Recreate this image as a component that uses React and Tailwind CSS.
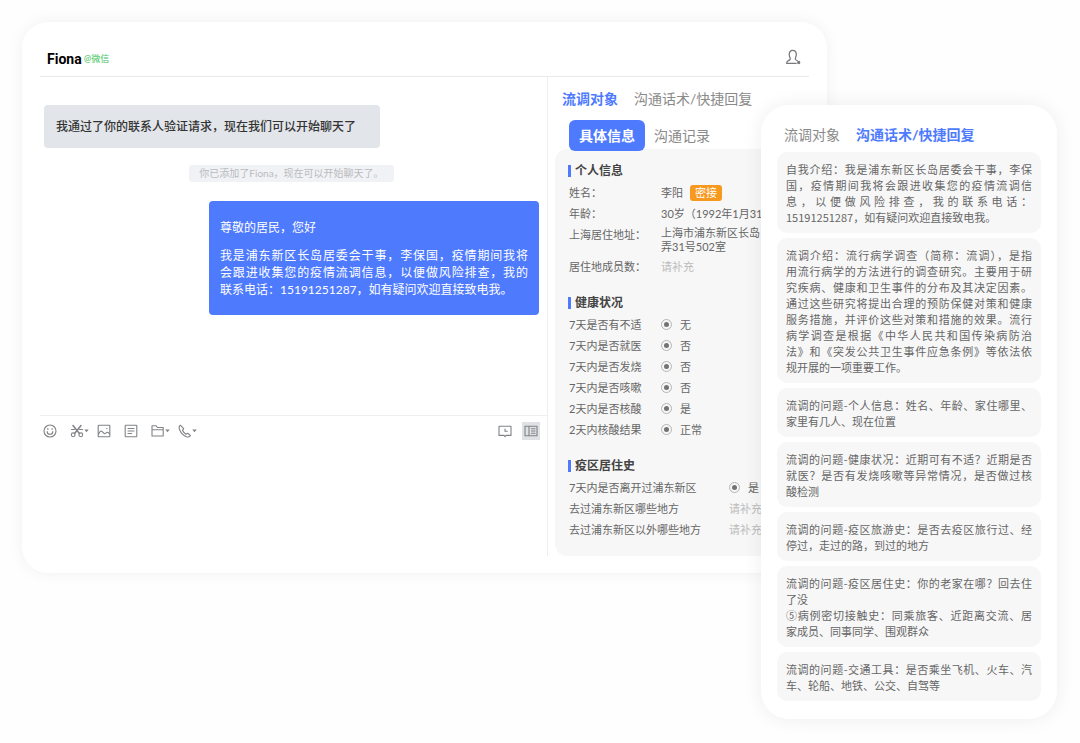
import { useState } from "react";

const GREETING = [
  "我是浦东新区长岛居委会干事，李保国，疫情期间我将",
  "会跟进收集您的疫情流调信息，以便做风险排查，我的",
  "联系电话：15191251287，如有疑问欢迎直接致电我。",
];

const HEALTH = [
  { label: "7天是否有不适", value: "无" },
  { label: "7天内是否就医", value: "否" },
  { label: "7天内是否发烧", value: "否" },
  { label: "7天内是否咳嗽", value: "否" },
  { label: "2天内是否核酸", value: "是" },
  { label: "2天内核酸结果", value: "正常" },
];

// each reply is a list of paragraphs, each paragraph a list of lines
const REPLIES = [
  [
    [
      "自我介绍：我是浦东新区长岛居委会干事，李保",
      "国，疫情期间我将会跟进收集您的疫情流调信",
      "息，以便做风险排查，我的联系电话：",
      "15191251287，如有疑问欢迎直接致电我。",
    ],
  ],
  [
    [
      "流调介绍：流行病学调查（简称：流调），是指",
      "用流行病学的方法进行的调查研究。主要用于研",
      "究疾病、健康和卫生事件的分布及其决定因素。",
      "通过这些研究将提出合理的预防保健对策和健康",
      "服务措施，并评价这些对策和措施的效果。流行",
      "病学调查是根据《中华人民共和国传染病防治",
      "法》和《突发公共卫生事件应急条例》等依法依",
      "规开展的一项重要工作。",
    ],
  ],
  [["流调的问题-个人信息：姓名、年龄、家住哪里、", "家里有几人、现在位置"]],
  [
    [
      "流调的问题-健康状况：近期可有不适？近期是否",
      "就医？是否有发烧咳嗽等异常情况，是否做过核",
      "酸检测",
    ],
  ],
  [["流调的问题-疫区旅游史：是否去疫区旅行过、经", "停过，走过的路，到过的地方"]],
  [
    ["流调的问题-疫区居住史：你的老家在哪？回去住", "了没"],
    ["⑤病例密切接触史：同乘旅客、近距离交流、居", "家成员、同事同学、围观群众"],
  ],
  [["流调的问题-交通工具：是否乘坐飞机、火车、汽", "车、轮船、地铁、公交、自驾等"]],
];

function Paragraph({ lines }) {
  return (
    <p>
      {lines.map((line, i) => (
        <span
          key={line}
          className={`block whitespace-nowrap ${
            i < lines.length - 1 ? "text-justify [text-align-last:justify]" : ""
          }`}
        >
          {line}
        </span>
      ))}
    </p>
  );
}

function Icon({ children, className = "size-[14px]" }) {
  return (
    <svg
      viewBox="0 0 14 14"
      className={className}
      fill="none"
      stroke="currentColor"
      strokeWidth="1.1"
      strokeLinecap="round"
      strokeLinejoin="round"
      aria-hidden="true"
    >
      {children}
    </svg>
  );
}

function Caret() {
  return (
    <svg viewBox="0 0 5 4" className="h-1 w-[5px]" fill="currentColor" aria-hidden="true">
      <path d="M0.3 0.6h4.4L2.5 3.2z" />
    </svg>
  );
}

function ToolButton({ label, caret, children }) {
  return (
    <button type="button" aria-label={label} className="flex w-[19px] shrink-0 items-center">
      <Icon className="size-[14px] shrink-0">{children}</Icon>
      {caret && <Caret />}
    </button>
  );
}

function Toolbar() {
  return (
    <div className="flex items-center gap-2 border-t border-[#eeeeef] py-1.5 pl-[3px] pr-[7px] text-[#808286]">
      <ToolButton label="表情">
        <circle cx="7" cy="7" r="6" />
        <path d="M4.2 7.6c.2 3.6 5.4 3.6 5.600 0M4.900 4.500v1M9.100 4.500v1" />
      </ToolButton>
      <ToolButton label="截图" caret>
        <path d="M3 1.500l6.400 8M11 1.500l-6.400 8" strokeWidth="1.500" />
        <path d="M1.500 5.500h3M9.500 5.500h3" />
        <circle cx="3.200" cy="10.800" r="1.900" />
        <circle cx="10.800" cy="10.800" r="1.900" />
      </ToolButton>
      <ToolButton label="图片">
        <rect x="1.200" y="1.200" width="11.600" height="11.600" rx="0.600" />
        <path d="M1.500 10.200C2.800 7.200 4 6.600 5.200 7.600s1.400 2.300 2.600 2 1.600-1.600 2.600-1.400 1.600.9 2.200 1.600M9.600 4.500h.4" />
      </ToolButton>
      <ToolButton label="文档">
        <rect x="1.200" y="1.200" width="11.600" height="11.600" rx="0.800" />
        <path d="M4 4.500h6M4 7h6M4 9.500h3.500" />
      </ToolButton>
      <ToolButton label="文件夹" caret>
        <path d="M1 12V1.800h4.200l1.200 1.700h5.800V12zM1 5.800h11.200" />
      </ToolButton>
      <ToolButton label="通话" caret>
        <path d="M2.300 1.200c-1.400.9-1.500 2.700-.6 4.800 1.400 3.200 4.100 5.700 6.900 6.700 1.900.6 3.200.2 3.800-1.200L9.700 9.200l-1.700 1C6.300 9.200 5.200 8 4.500 6.300l1.200-1.600z" />
      </ToolButton>
      <div className="ml-auto flex items-center gap-2.5">
        <button type="button" aria-label="历史">
          <Icon>
            <path d="M1 2.200h12v9.200H8l-1 1.200-1-1.200H1z" />
            <path d="M7 5v2.300h2.300" />
          </Icon>
        </button>
        <button
          type="button"
          aria-label="侧栏"
          className="flex size-[18px] items-center justify-center bg-[#dfe1e5]"
        >
          <Icon>
            <path d="M1 2.300h12v9.400H1zM5 2.300v9.400M7.500 4.800H11M7.500 7H11M7.500 9.200H11" />
          </Icon>
        </button>
      </div>
    </div>
  );
}

function Chat() {
  return (
    <section className="flex min-w-0 flex-1 flex-col border-r border-[#eeeeef]">
      <div className="flex flex-1 flex-col pl-1 pr-2 pt-7">
        <p className="self-start rounded bg-[#e2e5e9] py-3 pr-6 pl-3 text-[12px] leading-[19px] font-medium text-[#333]">
          我通过了你的联系人验证请求，现在我们可以开始聊天了
        </p>
        <p className="mt-[17px] self-center rounded-[3px] bg-[#f1f2f5] px-2.5 text-[10px] leading-[17px] text-[#b9bbbf]">
          你已添加了Fiona，现在可以开始聊天了。
        </p>
        <div className="mt-[19px] flex w-[330px] flex-col gap-[11px] self-end rounded bg-[#4e7afe] px-[11px] pt-[18px] pb-[17px] text-[12px] leading-[17px] text-white">
          <p>尊敬的居民，您好</p>
          <Paragraph lines={GREETING} />
        </div>
      </div>
      <Toolbar />
      <textarea aria-label="输入消息" className="h-[110px] resize-none p-1 text-[12px] outline-none" />
    </section>
  );
}

function Tabs({ active, onChange }) {
  return (
    <div className="flex gap-4 pl-[7px] text-[14px] leading-[21px] whitespace-nowrap">
      {["流调对象", "沟通话术/快捷回复"].map((tab) => (
        <button
          key={tab}
          type="button"
          onClick={() => onChange(tab)}
          className={tab === active ? "font-bold text-[#4e7afe]" : "text-[#8a8a8a]"}
        >
          {tab}
        </button>
      ))}
    </div>
  );
}

function Section({ title, children }) {
  return (
    <section className="mt-4 first:mt-0">
      <h3 className="mb-px flex items-center gap-1 text-[12px] leading-5 font-bold text-[#444]">
        <span className="-ml-px h-3 w-[3px] bg-[#4e7afe]" />
        {title}
      </h3>
      {children}
    </section>
  );
}

function RadioValue({ id, label }) {
  return (
    <span className="flex items-center gap-2 whitespace-nowrap">
      <input
        id={id}
        type="radio"
        defaultChecked
        className="size-[11px] appearance-none rounded-full border border-[#b5b5b5] bg-[#737373] bg-clip-content p-0.5"
      />
      <label htmlFor={id}>{label}</label>
    </span>
  );
}

function FillIn({ id }) {
  return (
    <input id={id} placeholder="请补充" className="w-full min-w-0 outline-none placeholder:text-[#bcbcbc]" />
  );
}

function Details() {
  const [tab, setTab] = useState("流调对象");

  return (
    <section className="w-[261px] shrink-0 pt-[11px] pl-[7px]">
      <Tabs active={tab} onChange={setTab} />
      <div className="relative mt-[11px] -mb-0.5 flex items-center gap-[9px] pl-[14px] text-[14px] leading-[31px]">
        <button type="button" className="rounded-md bg-[#4e7afe] px-[10px] font-bold text-white">
          具体信息
        </button>
        <button type="button" className="text-[#8a8a8a]">
          沟通记录
        </button>
      </div>
      <div className="overflow-hidden rounded-xl bg-[#f7f7f7] px-[14px] pt-3 pb-4 text-[11px] leading-[21px] text-[#666]">
        <Section title="个人信息">
          <dl className="grid grid-cols-[92px_1fr] whitespace-nowrap">
            <dt>姓名：</dt>
            <dd className="flex items-center gap-[7px]">
              李阳
              <span className="rounded-[3px] bg-[#f7981f] px-[5px] leading-4 text-white">密接</span>
            </dd>
            <dt>年龄：</dt>
            <dd>30岁（1992年1月31</dd>
            <dt>上海居住地址：</dt>
            <dd className="py-0.5 leading-[14px]">
              上海市浦东新区长岛
              <br />
              弄31号502室
            </dd>
            <dt>
              <label htmlFor="members">居住地成员数：</label>
            </dt>
            <dd>
              <FillIn id="members" />
            </dd>
          </dl>
        </Section>
        <Section title="健康状况">
          <dl className="grid grid-cols-[92px_1fr]">
            {HEALTH.map((row, i) => (
              <div key={row.label} className="col-span-2 grid grid-cols-subgrid">
                <dt>{row.label}</dt>
                <dd>
                  <RadioValue id={`health-${i}`} label={row.value} />
                </dd>
              </div>
            ))}
          </dl>
        </Section>
        <Section title="疫区居住史">
          <dl className="grid grid-cols-[160px_1fr] whitespace-nowrap">
            <dt>7天内是否离开过浦东新区</dt>
            <dd>
              <RadioValue id="left-area" label="是" />
            </dd>
            <dt>
              <label htmlFor="inside">去过浦东新区哪些地方</label>
            </dt>
            <dd>
              <FillIn id="inside" />
            </dd>
            <dt>
              <label htmlFor="outside">去过浦东新区以外哪些地方</label>
            </dt>
            <dd>
              <FillIn id="outside" />
            </dd>
          </dl>
        </Section>
      </div>
    </section>
  );
}

function QuickReplies() {
  const [tab, setTab] = useState("沟通话术/快捷回复");

  return (
    <aside className="relative mt-[83px] -ml-[66px] w-[296px] shrink-0 rounded-[28px] bg-white px-4 pt-[19px] pb-[18px] shadow-[0_0_20px_rgba(0,0,0,0.07)]">
      <Tabs active={tab} onChange={setTab} />
      <ul className="mt-[7px] flex flex-col gap-[5px] font-['Noto_Sans_CJK_SC',sans-serif] text-[11px] leading-4 text-[#666]">
        {REPLIES.map((paragraphs) => (
          <li key={paragraphs[0][0]} className="rounded-[10px] bg-[#f7f7f7] px-[9px] pt-[9px] pb-2">
            {paragraphs.map((lines) => (
              <Paragraph key={lines[0]} lines={lines} />
            ))}
          </li>
        ))}
      </ul>
    </aside>
  );
}

export default function App() {
  return (
    <div className="flex min-h-screen items-start bg-[#fefefe] py-[22px] pr-[23px] pl-[22px] font-['Lato','Noto_Sans_CJK_SC',sans-serif]">
      <main className="min-w-0 flex-1 rounded-[26px] bg-white px-[18px] pb-[17px] shadow-[0_0_16px_rgba(0,0,0,0.06)]">
        <header className="flex h-[55px] items-center border-b border-[#e9e9ea] pt-5 pr-2 pl-[7px]">
          <h1 className="font-['Roboto',sans-serif] text-[14px] leading-5 font-bold text-black">Fiona</h1>
          <span className="ml-0.5 text-[9px] leading-5 text-[#3cc35a]">@微信</span>
          <button type="button" aria-label="联系人" className="mb-1 ml-auto text-[#77797d]">
            <Icon className="size-4">
              <path d="M9.800 12.500H1.400c0-2.400 1.600-2.200 3-3.200.9-.8-.7-2.200-.7-4.400C3.700 2.500 4.900 1.200 6.800 1.200s3.100 1.300 3.100 3.700c0 2.200-1.600 3.600-.7 4.400.5.4 1 .6 1.500.8" />
              <circle cx="12" cy="11.800" r="0.900" fill="currentColor" />
            </Icon>
          </button>
        </header>
        <div className="flex">
          <Chat />
          <Details />
        </div>
      </main>
      <QuickReplies />
    </div>
  );
}
